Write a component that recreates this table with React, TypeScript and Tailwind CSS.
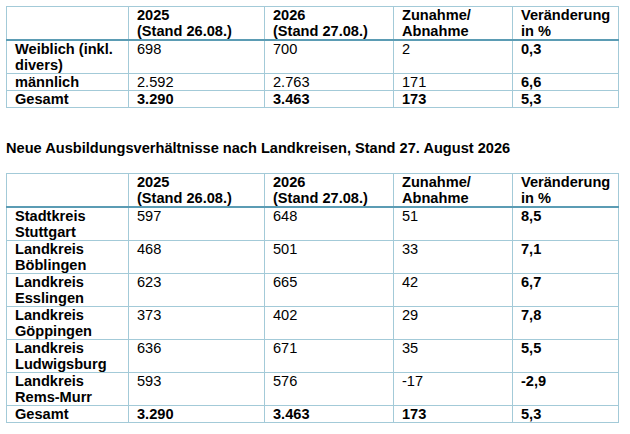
const headers = ["", "2025\n(Stand 26.08.)", "2026\n(Stand 27.08.)", "Zunahme/\nAbnahme", "Veränderung\nin %"];

type Row = { label: string; values: string[]; total?: boolean };

const genderRows: Row[] = [
  { label: "Weiblich (inkl.\ndivers)", values: ["698", "700", "2", "0,3"] },
  { label: "männlich", values: ["2.592", "2.763", "171", "6,6"] },
  { label: "Gesamt", values: ["3.290", "3.463", "173", "5,3"], total: true },
];

const districtRows: Row[] = [
  { label: "Stadtkreis\nStuttgart", values: ["597", "648", "51", "8,5"] },
  { label: "Landkreis\nBöblingen", values: ["468", "501", "33", "7,1"] },
  { label: "Landkreis\nEsslingen", values: ["623", "665", "42", "6,7"] },
  { label: "Landkreis\nGöppingen", values: ["373", "402", "29", "7,8"] },
  { label: "Landkreis\nLudwigsburg", values: ["636", "671", "35", "5,5"] },
  { label: "Landkreis\nRems-Murr", values: ["593", "576", "-17", "-2,9"] },
  { label: "Gesamt", values: ["3.290", "3.463", "173", "5,3"], total: true },
];

const colWidths = ["w-[122px]", "w-[136px]", "w-[129px]", "w-[119px]", "w-[106px]"];

function StatsTable({ rows }: { rows: Row[] }) {
  return (
    <table className="border-collapse table-fixed w-[612px] text-[14.6px] leading-[16px] text-black">
      <colgroup>
        {colWidths.map((w, i) => (
          <col key={i} className={w} />
        ))}
      </colgroup>
      <thead>
        <tr>
          {headers.map((h, i) => (
            <th
              key={i}
              className="border border-[#a3cad8] border-b-2 border-b-[#5b9cb4] px-2 py-0 text-left align-top font-bold whitespace-pre-line"
            >
              {h}
            </th>
          ))}
        </tr>
      </thead>
      <tbody>
        {rows.map((row) => (
          <tr key={row.label}>
            <td className="border border-[#a3cad8] px-2 py-0 align-top font-bold whitespace-pre-line">
              {row.label}
            </td>
            {row.values.map((v, i) => (
              <td
                key={i}
                className={`border border-[#a3cad8] px-2 py-0 align-top ${
                  row.total || i === 3 ? "font-bold" : "font-normal"
                }`}
              >
                {v}
              </td>
            ))}
          </tr>
        ))}
      </tbody>
    </table>
  );
}

export default function App() {
  return (
    <div className="w-[630px] h-[434px] bg-white pl-[6px] pt-[6px] font-['Liberation_Sans',Arial,sans-serif]">
      <StatsTable rows={genderRows} />
      <p className="mt-[32px] mb-[17px] text-[14.6px] leading-[16px] font-bold text-black">
        Neue Ausbildungsverhältnisse nach Landkreisen, Stand 27. August 2026
      </p>
      <StatsTable rows={districtRows} />
    </div>
  );
}
